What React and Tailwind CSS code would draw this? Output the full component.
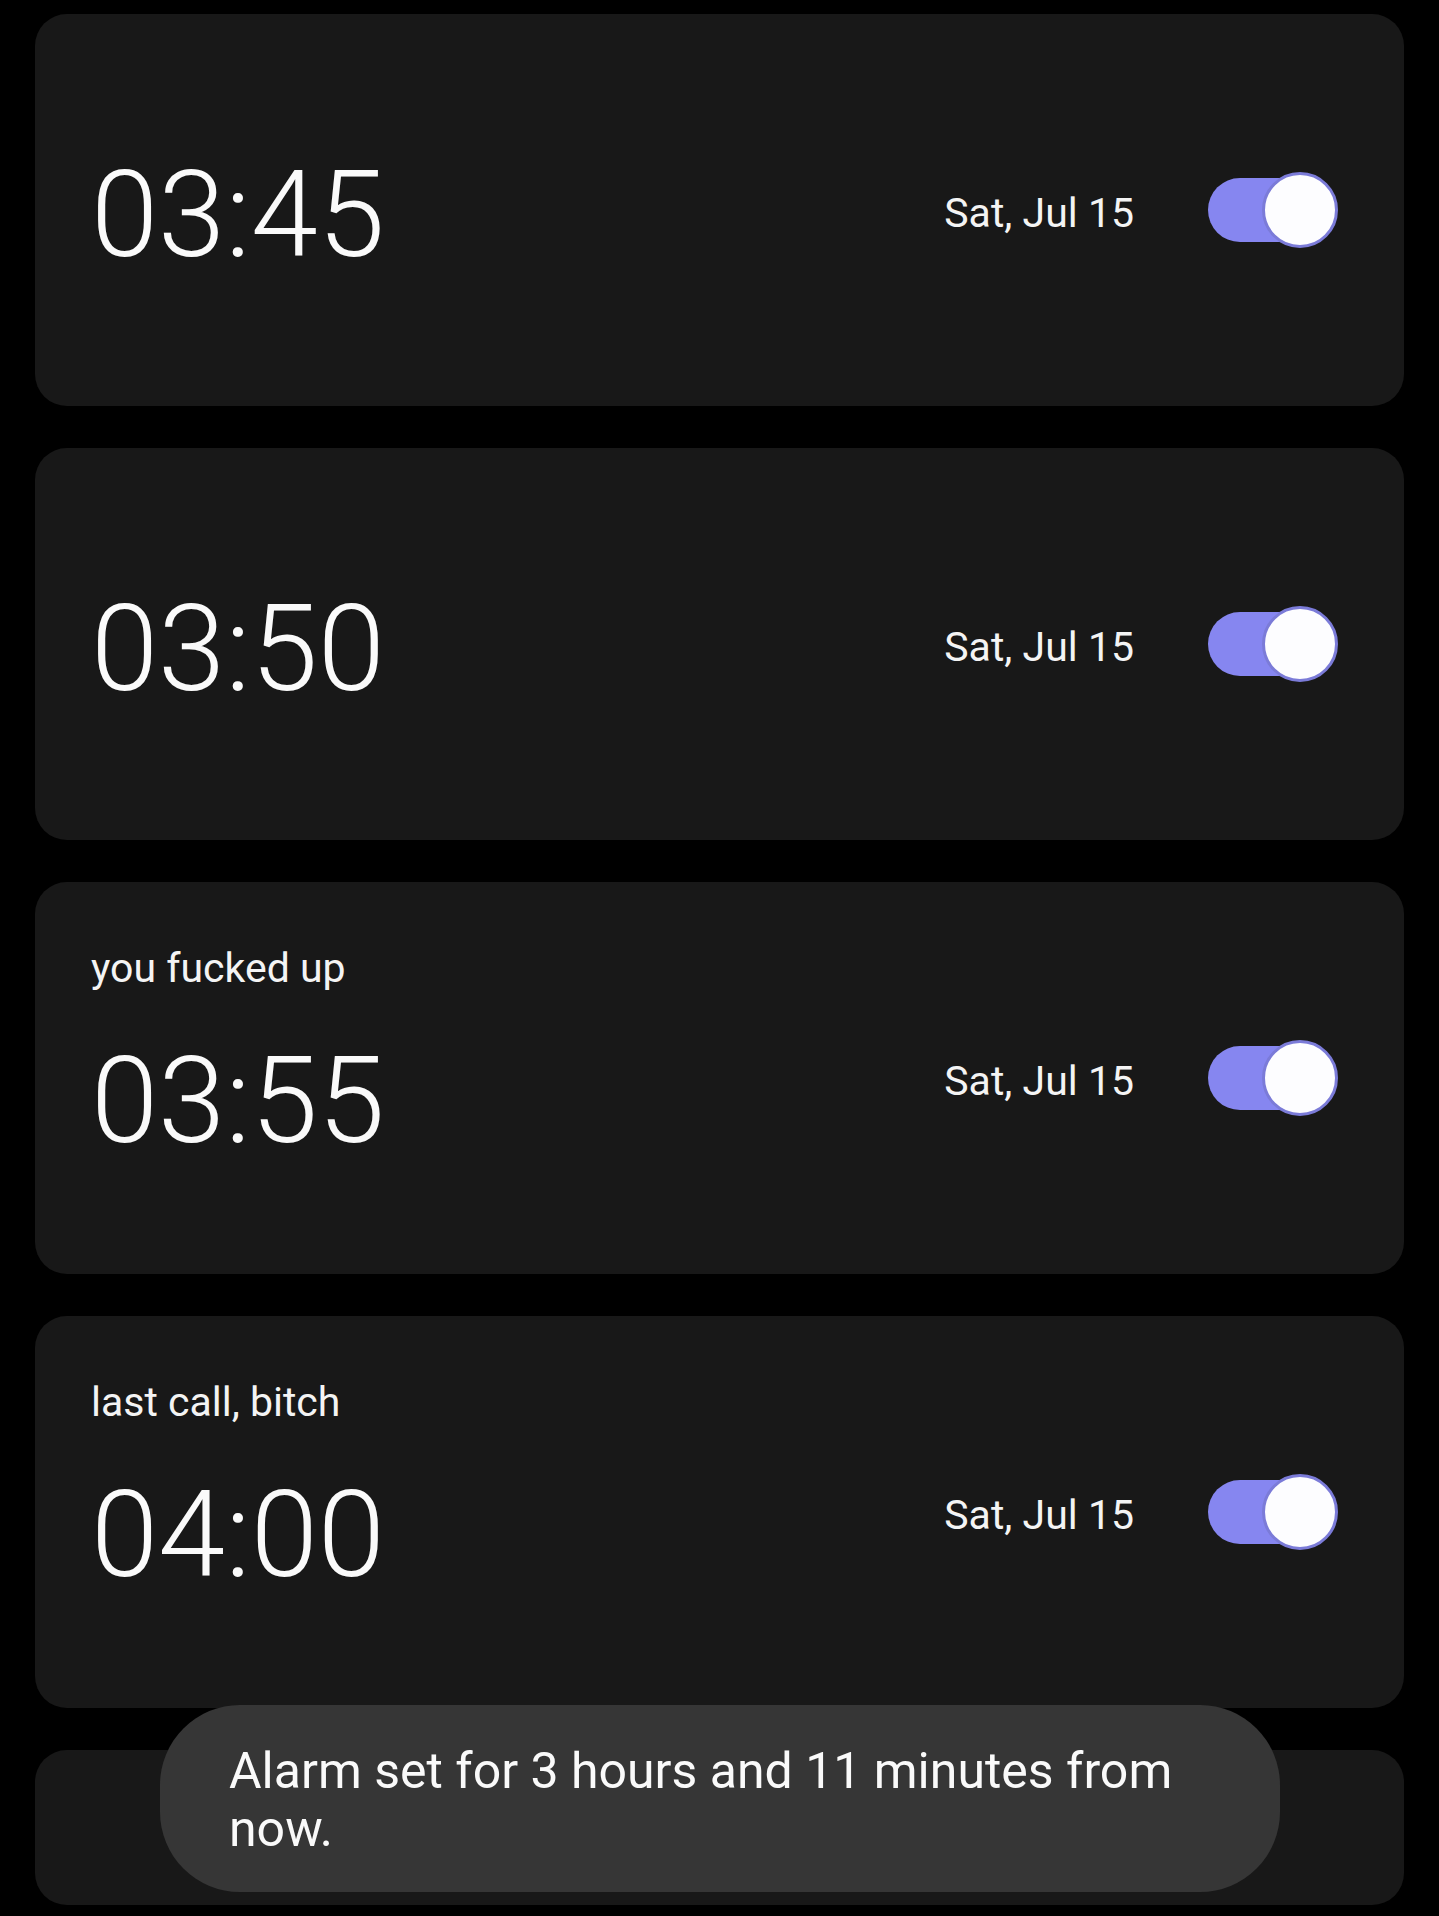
const alarms = [
  { id: 1, time: "03:45", date: "Sat, Jul 15", label: null, on: true },
  { id: 2, time: "03:50", date: "Sat, Jul 15", label: null, on: true },
  { id: 3, time: "03:55", date: "Sat, Jul 15", label: "you fucked up", on: true },
  { id: 4, time: "04:00", date: "Sat, Jul 15", label: "last call, bitch", on: true },
];

function Toggle() {
  return (
    <div className="flex items-center">
      <div className="w-[112px] h-[64px] rounded-full bg-[#8686f0]" />
      <div className="-ml-[58px] w-[76px] h-[76px] rounded-full border-[3px] border-[#7b7bd8] bg-[#fdfdff]" />
    </div>
  );
}

function AlarmCard({ alarm }) {
  return (
    <div className="flex justify-between h-[392px] rounded-[32px] bg-[#181818] pl-[56px] pr-[66px]">
      {/* label + time */}
      {alarm.label ? (
        <div className="flex flex-col pt-[66px]">
          <span className="text-[41px] leading-none text-[#f4f4f4]">{alarm.label}</span>
          <span className="mt-[52px] text-[121px] leading-none font-light text-[#fafafa]">{alarm.time}</span>
        </div>
      ) : (
        <div className="flex flex-col pt-[141px]">
          <span className="text-[121px] leading-none font-light text-[#fafafa]">{alarm.time}</span>
        </div>
      )}

      {/* date + switch */}
      <div className="flex items-center gap-[74px]">
        <span className="mt-[6px] text-[41px] leading-none text-[#f4f4f4]">{alarm.date}</span>
        <Toggle />
      </div>
    </div>
  );
}

export default function App() {
  return (
    <div
      className="relative h-[1916px] overflow-hidden bg-black"
      style={{ fontFamily: "Roboto, 'Noto Sans', sans-serif" }}
    >
      <div className="flex flex-col gap-[42px] pt-[14px] px-[35px]">
        {alarms.map((alarm) => (
          <AlarmCard key={alarm.id} alarm={alarm} />
        ))}
        {/* next alarm, cut off at the bottom */}
        <div className="h-[155px] rounded-[32px] bg-[#181818]" />
      </div>

      {/* toast */}
      <div className="absolute left-[160px] top-[1705px] w-[1120px] rounded-[80px] bg-[#363636] pl-[69px] pr-[50px] pt-[37px] pb-[34px]">
        <p className="text-[50px] leading-[58px] text-[#fafafa]">
          Alarm set for 3 hours and 11 minutes from now.
        </p>
      </div>
    </div>
  );
}
